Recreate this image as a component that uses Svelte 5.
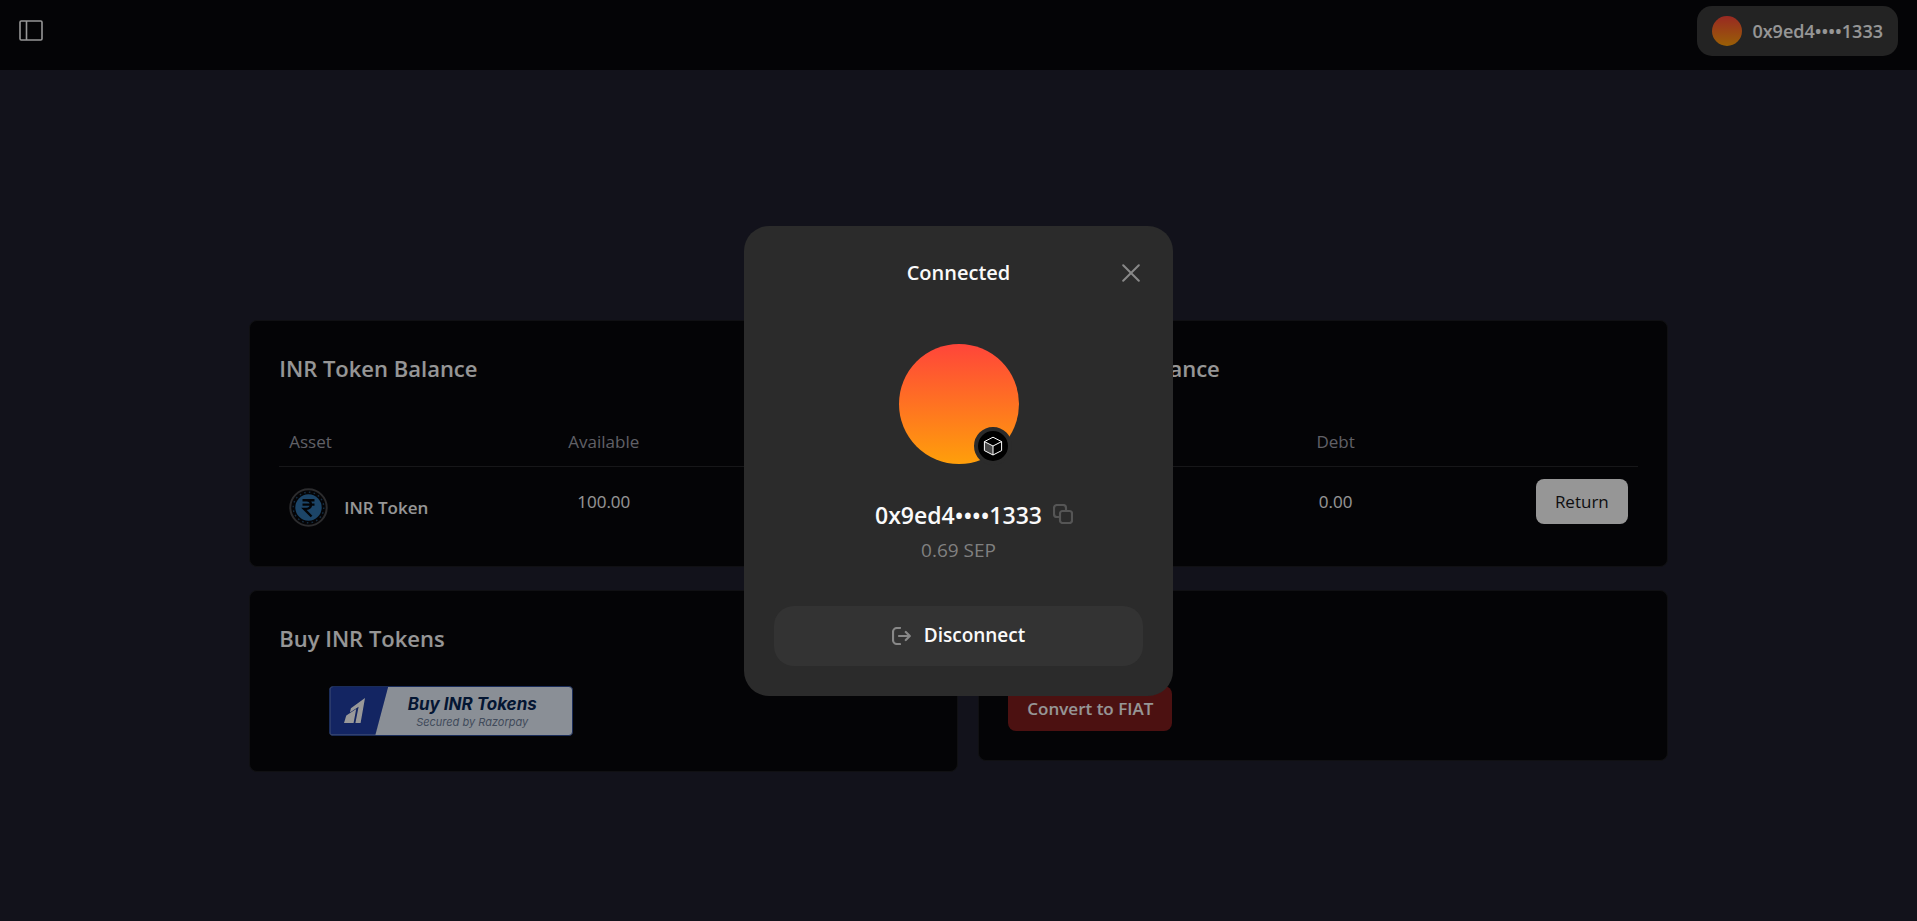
<script lang="ts">
  const address = '0x9ed4••••1333';
  const balance = '0.69 SEP';

  const balances = [
    { title: 'INR Token Balance', column: 'Available', amount: '100.00', action: '' },
    { title: 'Debt Token Balance', column: 'Debt', amount: '0.00', action: 'Return' }
  ];

  let open = true;
</script>

<div class="page">
  <header>
    <button class="icon-button" aria-label="Toggle sidebar">
      <svg width="24" height="24" viewBox="0 0 24 24" fill="none" stroke="currentColor" stroke-width="1.6">
        <rect x="1" y="2" width="22" height="19" rx="1.2" />
        <path d="M7.5 2v19" />
      </svg>
    </button>
    <button class="account" on:click={() => (open = true)}>
      <span class="avatar small"></span>
      {address}
    </button>
  </header>

  <main>
    <div class="cards">
      {#each balances as item}
        <section class="card">
          <h2>{item.title}</h2>
          <table>
            <thead>
              <tr>
                <th class="asset-col">Asset</th>
                <th class="amount">{item.column}</th>
                <th class="action-col" aria-label="Action"></th>
              </tr>
            </thead>
            <tbody>
              <tr>
                <td>
                  <div class="asset">
                    <svg width="39" height="39" viewBox="0 0 39 39" fill="none">
                      <circle cx="19.5" cy="19.5" r="18.2" stroke="#4a4a4d" stroke-width="2" />
                      <circle cx="19.5" cy="19.5" r="15.3" stroke="#234a6c" stroke-width="1.4" stroke-dasharray="1.6 3.2" />
                      <circle cx="19.5" cy="19.5" r="13.2" fill="#2f74ae" />
                      <path d="M13.5 12.3h12M13.5 16.6h12M14 12.3h3.5c6 0 6 8.6 0 8.6H15l7.5 7.6" stroke="#06080c" stroke-width="2.4" />
                    </svg>
                    INR Token
                  </div>
                </td>
                <td class="amount">{item.amount}</td>
                <td class="action">
                  {#if item.action}
                    <button class="button light">{item.action}</button>
                  {/if}
                </td>
              </tr>
            </tbody>
          </table>
        </section>
      {/each}

      <section class="card">
        <h2>Buy INR Tokens</h2>
        <button class="razorpay">
          <span class="mark">
            <svg width="22" height="26" viewBox="0 0 22 26">
              <path fill="#fff" d="M21 0 16.6 25h-5.2l3.2-16.3-8.7 5.7 1-4.2z" />
              <path fill="#fff" d="M2.3 17.6 12.2 11 9.6 25H0z" />
            </svg>
          </span>
          <span class="label">
            <strong>Buy INR Tokens</strong>
            <small>Secured by Razorpay</small>
          </span>
        </button>
      </section>

      <section class="card untitled">
        <button class="button danger">Convert to FIAT</button>
      </section>
    </div>
  </main>
</div>

{#if open}
  <div class="overlay">
    <div class="modal" role="dialog" aria-modal="true" aria-labelledby="modal-title">
      <div class="modal-head">
        <h1 id="modal-title">Connected</h1>
        <button class="icon-button close" aria-label="Close" on:click={() => (open = false)}>
          <svg width="18" height="18" viewBox="0 0 18 18" stroke="currentColor" stroke-width="2" stroke-linecap="round">
            <path d="M1.2 1.2l15.6 15.6M16.8 1.2 1.2 16.8" />
          </svg>
        </button>
      </div>

      <div class="avatar large">
        <span class="chain">
          <svg width="20" height="20" viewBox="0 0 20 20" fill="none" stroke="#fff" stroke-width="1" stroke-linejoin="round">
            <path d="M1.4 5.6 10 10v9L1.4 14.6z" fill="#4a4a4a" stroke="none" />
            <path d="M10 1.2l8.6 4.4v9L10 19l-8.6-4.4v-9zM1.4 5.6 10 10l8.6-4.4M10 10v9" />
          </svg>
        </span>
      </div>

      <div class="address">
        {address}
        <button class="icon-button copy" aria-label="Copy address">
          <svg width="20" height="20" viewBox="0 0 20 20" fill="none" stroke="currentColor" stroke-width="2.2">
            <path d="M6.5 13H4a3 3 0 0 1-3-3V4a3 3 0 0 1 3-3h6a3 3 0 0 1 3 3v2.5" />
            <rect x="7" y="7" width="12" height="12" rx="2.5" />
          </svg>
        </button>
      </div>
      <p>{balance}</p>

      <button class="disconnect">
        <svg width="19" height="18" viewBox="0 0 19 18" fill="none" stroke="currentColor" stroke-width="2.2" stroke-linecap="round" stroke-linejoin="round">
          <path d="M8 1H5a4 4 0 0 0-4 4v8a4 4 0 0 0 4 4h3M7 9h10.5M13.8 5l4 4-4 4" />
        </svg>
        Disconnect
      </button>
    </div>
  </div>
{/if}

<style>
  :global(body) {
    background: #1e1f2d;
    color: #fafafa;
    font: 17px/25px 'Open Sans', 'Noto Sans', sans-serif;
  }
  * {
    box-sizing: border-box;
  }
  h1,
  h2,
  p {
    margin: 0;
  }
  button {
    border: 0;
    padding: 0;
    color: inherit;
    font: inherit;
    cursor: pointer;
  }
  svg {
    display: block;
    flex: none;
  }
  .page {
    min-height: 100vh;
    display: flex;
    flex-direction: column;
  }
  header {
    height: 70px;
    padding: 6px 19px 14px;
    display: flex;
    align-items: center;
    justify-content: space-between;
    background: #07070a;
  }
  .icon-button {
    background: none;
  }
  .account {
    height: 50px;
    padding: 0 15px;
    display: flex;
    align-items: center;
    gap: 10px;
    border-radius: 15px;
    background: #3b3b3b;
    font-size: 18px;
    font-weight: 600;
  }
  .avatar {
    border-radius: 50%;
    background: linear-gradient(#ff453a, #ff9f0a);
  }
  .small {
    width: 30px;
    height: 30px;
  }
  main {
    flex: 1;
    padding-top: 101px;
    display: flex;
    align-items: center;
    justify-content: center;
  }
  .cards {
    width: 74%;
    display: grid;
    grid-template-columns: 36fr 35fr;
    gap: 23px 20px;
    align-items: start;
  }
  .card {
    padding: 30px 29px 29px;
    border: 1px solid #1c1c20;
    border-radius: 8px;
    background: #07070a;
  }
  .untitled {
    padding-top: 95px;
  }
  h2 {
    margin-bottom: 30px;
    font-size: 22px;
    line-height: 35px;
    font-weight: 600;
  }
  table {
    width: 100%;
    border-collapse: collapse;
    table-layout: fixed;
  }
  th {
    height: 50px;
    padding: 0 10px;
    border-bottom: 1px solid #27272a;
    color: #a1a1aa;
    font-weight: 500;
    text-align: left;
  }
  th.amount {
    width: 30%;
    text-align: center;
  }
  .asset-col {
    width: 35%;
  }
  .card:nth-child(2) .asset-col {
    width: 37%;
  }
  td {
    padding: 12px 10px 10px;
    vertical-align: top;
  }
  .asset {
    padding-top: 9px;
    display: flex;
    align-items: center;
    gap: 16px;
    font-weight: 600;
  }
  .amount {
    text-align: center;
  }
  td.amount {
    line-height: 46px;
  }
  .action {
    text-align: right;
  }
  .button {
    height: 45px;
    padding: 0 19px;
    border-radius: 8px;
    vertical-align: top;
    font-weight: 600;
  }
  .light {
    background: #fafafa;
    color: #18181b;
    font-weight: 500;
  }
  .danger {
    background: #7f1d1d;
  }
  .razorpay {
    width: 244px;
    height: 50px;
    margin: 0 50px 6px;
    display: flex;
    overflow: hidden;
    border: 1px solid #2c4a94;
    border-radius: 4px;
    background: #e6eefa;
    color: #072654;
    font-family: Inter, sans-serif;
    font-style: italic;
  }
  .mark {
    width: 58px;
    display: flex;
    align-items: center;
    align-self: stretch;
    padding-left: 14px;
    background: #203fa3;
    clip-path: polygon(0 0, 100% 0, 78% 100%, 0 100%);
  }
  .label {
    flex: 1;
    padding: 7px 16px 0 0;
    display: flex;
    flex-direction: column;
  }
  .label strong {
    font-size: 17px;
    line-height: 21px;
  }
  .label small {
    color: #6d7d98;
    font-size: 11px;
    line-height: 14px;
  }
  .overlay {
    position: fixed;
    inset: 0;
    display: flex;
    align-items: center;
    justify-content: center;
    background: rgba(0, 0, 0, 0.4);
  }
  .modal {
    width: 429px;
    padding: 28px 30px 30px;
    border-radius: 25px;
    background: #2b2b2b;
  }
  .modal-head {
    height: 38px;
    margin-bottom: 52px;
    display: grid;
    grid-template-columns: 1fr auto 1fr;
    align-items: center;
  }
  h1 {
    grid-column: 2;
    font-size: 20px;
    font-weight: 600;
  }
  .close {
    justify-self: end;
    margin-right: 3px;
    color: #888;
  }
  .large {
    position: relative;
    width: 120px;
    height: 120px;
    margin: 0 auto 35px;
  }
  .chain {
    position: absolute;
    right: 7px;
    bottom: -1px;
    width: 38px;
    height: 38px;
    display: grid;
    place-items: center;
    border: 4px solid #2b2b2b;
    border-radius: 50%;
    background: #000;
  }
  .address {
    position: relative;
    width: max-content;
    margin: 0 auto;
    font-size: 23px;
    line-height: 32px;
    font-weight: 600;
  }
  .copy {
    position: absolute;
    left: calc(100% + 11px);
    top: 5px;
    color: #555;
  }
  p {
    margin: 4px 0 41px;
    color: #808080;
    font-size: 19px;
    line-height: 30px;
    text-align: center;
  }
  .disconnect {
    width: 100%;
    height: 60px;
    display: flex;
    align-items: center;
    justify-content: center;
    gap: 13px;
    border-radius: 20px;
    background: #333;
    font-size: 19px;
    font-weight: 600;
  }
  .disconnect svg {
    color: #888;
  }
</style>
